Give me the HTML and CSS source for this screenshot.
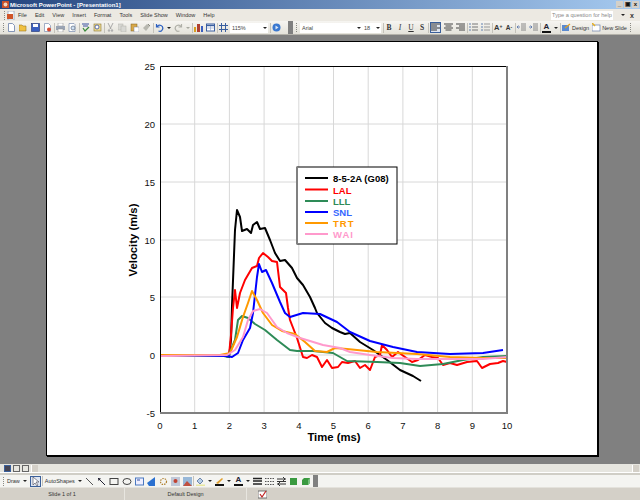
FILE: index.html
```html
<!DOCTYPE html>
<html lang="en">
<head>
<meta charset="UTF-8">
<title>Microsoft PowerPoint - [Presentation1]</title>
<link rel="stylesheet" href="styles.css">
</head>
<body>
<div class="app">

  <!-- title bar -->
  <div class="titlebar">
    <svg class="ic app-icon" viewBox="0 0 9 9"><rect width="9" height="9" fill="#c8502a"/><circle cx="4.5" cy="4.5" r="2.5" fill="#f5d8c0"/></svg>
    <span class="title-text">Microsoft PowerPoint - [Presentation1]</span>
    <div class="win-buttons">
      <span class="win-btn">_</span><span class="win-btn">&#9635;</span><span class="win-btn">x</span>
    </div>
  </div>

  <!-- menu bar -->
  <div class="menubar">
    <span class="grip"></span>
    <svg class="ic doc-icon" viewBox="0 0 9 9"><rect x="1" y="0" width="6" height="9" fill="#fff" stroke="#7a8cb0" stroke-width=".6"/><rect x="0" y="3" width="6" height="5" fill="#d0552a"/></svg>
    <span class="menu">File</span>
    <span class="menu">Edit</span>
    <span class="menu">View</span>
    <span class="menu">Insert</span>
    <span class="menu">Format</span>
    <span class="menu">Tools</span>
    <span class="menu">Slide Show</span>
    <span class="menu">Window</span>
    <span class="menu">Help</span>
    <span class="spacer"></span>
    <span class="help-box">Type a question for help</span>
    <span class="drop"></span>
    <span class="close-x">x</span>
  </div>

  <!-- standard + formatting toolbars -->
  <div class="toolbar">
    <span class="grip"></span>
    <svg class="ic" viewBox="0 0 9 9"><path d="M1.5.5h4l2 2v6h-6z" fill="#fff" stroke="#6a7fa8" stroke-width=".8"/></svg>
    <svg class="ic" viewBox="0 0 9 9"><path d="M0 2h3l1 1h3v5H0z" fill="#f0c040" stroke="#a07820" stroke-width=".6"/></svg>
    <svg class="ic" viewBox="0 0 9 9"><rect x=".5" y=".5" width="8" height="8" fill="#3a5fc0" stroke="#1c2f70" stroke-width=".6"/><rect x="2" y="1" width="5" height="3" fill="#fff"/></svg>
    <svg class="ic" viewBox="0 0 9 9"><path d="M1.5.5h4l2 2v6h-6z" fill="#fff" stroke="#7a8cb0" stroke-width=".7"/><circle cx="6" cy="6.5" r="2" fill="#d84a30"/></svg>
    <span class="sep"></span>
    <svg class="ic" viewBox="0 0 9 9"><rect x="2" y="0" width="5" height="3" fill="#fff" stroke="#888" stroke-width=".5"/><rect x="0" y="3" width="9" height="4" fill="#9aa4b4"/><rect x="2" y="6" width="5" height="3" fill="#fff" stroke="#888" stroke-width=".5"/></svg>
    <svg class="ic" viewBox="0 0 9 9"><path d="M1 .5h5l1 1v7H1z" fill="#fff" stroke="#7a8cb0" stroke-width=".7"/><circle cx="5" cy="5" r="2" fill="#cfe0f4" stroke="#5a6a80" stroke-width=".7"/></svg>
    <span class="sep"></span>
    <svg class="ic" viewBox="0 0 9 9"><path d="M1 1h7M2 3h5" stroke="#3a50a0" stroke-width="1.2"/><path d="M2 5l2 3 4-4" fill="none" stroke="#3a8a3a" stroke-width="1.2"/></svg>
    <svg class="ic" viewBox="0 0 9 9"><rect x="1" y="1" width="7" height="7" fill="#e8d890" stroke="#907830" stroke-width=".6"/><circle cx="4" cy="4" r="2" fill="#fff" stroke="#3a50a0" stroke-width=".8"/></svg>
    <span class="sep"></span>
    <svg class="ic" viewBox="0 0 9 9"><path d="M2 0l3 6M7 0L4 6" stroke="#a0a0a0" stroke-width=".9"/><circle cx="3" cy="7.5" r="1.2" fill="#b0b0b0"/><circle cx="6" cy="7.5" r="1.2" fill="#b0b0b0"/></svg>
    <svg class="ic" viewBox="0 0 9 9"><rect x="0" y="1" width="5" height="6" fill="#d8d8d4" stroke="#b0b0a8" stroke-width=".5"/><rect x="3" y="3" width="5" height="6" fill="#d8d8d4" stroke="#b0b0a8" stroke-width=".5"/></svg>
    <svg class="ic" viewBox="0 0 9 9"><rect x="1" y="1" width="6" height="7" fill="#d8a848" stroke="#806020" stroke-width=".5"/><rect x="4" y="4" width="5" height="5" fill="#fff" stroke="#8088a0" stroke-width=".5"/></svg>
    <svg class="ic" viewBox="0 0 9 9"><path d="M1 5l4-4 3 2-4 5z" fill="#b8b8b0"/><path d="M6 1l2 2" stroke="#8a8a80"/></svg>
    <span class="sep"></span>
    <svg class="ic" viewBox="0 0 9 9"><path d="M1.5 1v3h3M2 4a3 3 0 1 1 1.5 4" fill="none" stroke="#2a5fc0" stroke-width="1.2"/></svg>
    <span class="drop"></span>
    <svg class="ic" viewBox="0 0 9 9"><path d="M7.5 1v3h-3M7 4a3 3 0 1 0-1.5 4" fill="none" stroke="#b0b0a8" stroke-width="1.2"/></svg>
    <span class="drop off"></span>
    <span class="sep"></span>
    <svg class="ic" viewBox="0 0 9 9"><rect x="0" y="4" width="2" height="5" fill="#d8a020"/><rect x="3" y="1" width="3" height="8" fill="#b04030"/><rect x="7" y="3" width="2" height="6" fill="#3a5fc0"/></svg>
    <svg class="ic" viewBox="0 0 9 9"><rect x=".5" y="1" width="8" height="7" fill="#fff" stroke="#3a5fa0"/><path d="M.5 2.5h8" stroke="#3a5fa0" stroke-width="1.4"/><path d="M.5 5h8M4.5 3v5" stroke="#8aa0c8" stroke-width=".6"/></svg>
    <span class="sep"></span>
    <svg class="ic" viewBox="0 0 9 9"><path d="M0 2.5h9M0 6.500h9M2.500 0v9M6.500 0v9" stroke="#3a5fa0" stroke-width="1"/></svg>
    <span class="combo zoom-combo"><span class="combo-text">115%</span><span class="drop"></span></span>
    <span class="sep"></span>
    <svg class="ic" viewBox="0 0 9 9"><circle cx="4.500" cy="4.500" r="4" fill="#3a78d0"/><path d="M3.500 2.500l3 2-3 2z" fill="#dce8f8"/></svg>
    <span class="bar-end"></span>
    <span class="grip"></span>
    <span class="combo font-combo"><span class="combo-text">Arial</span><span class="drop"></span></span>
    <span class="combo size-combo"><span class="combo-text">18</span><span class="drop"></span></span>
    <span class="sep"></span>
    <span class="fmt bold">B</span>
    <span class="fmt italic">I</span>
    <span class="fmt under">U</span>
    <span class="fmt bold">S</span>
    <span class="sep"></span>
    <span class="active-btn"><svg class="ic" viewBox="0 0 9 9"><path d="M0 1h9M0 3h6M0 5h9M0 7h6" stroke="#333" stroke-width="1"/></svg></span>
    <svg class="ic" viewBox="0 0 9 9"><path d="M0 1h9M1.500 3h6M0 5h9M1.500 7h6" stroke="#444" stroke-width="1"/></svg>
    <svg class="ic" viewBox="0 0 9 9"><path d="M0 1h9M3 3h6M0 5h9M3 7h6" stroke="#444" stroke-width="1"/></svg>
    <span class="sep"></span>
    <svg class="ic" viewBox="0 0 9 9"><path d="M0 1h2M0 4h2M0 7h2" stroke="#6080b0"/><path d="M3 1h6M3 4h6M3 7h6" stroke="#777"/></svg>
    <svg class="ic" viewBox="0 0 9 9"><path d="M0 1h2M0 4h2M0 7h2" stroke="#6080b0"/><path d="M3 1h6M3 4h6M3 7h6" stroke="#999"/></svg>
    <span class="sep"></span>
    <span class="fmt bold grow-a">A<i>+</i></span>
    <span class="fmt bold grow-a small-a">A<i>-</i></span>
    <span class="sep"></span>
    <svg class="ic" viewBox="0 0 9 9"><path d="M4 1h5M4 3h5M4 5h5M4 7h5" stroke="#888"/><path d="M3 4H0M1.500 2.500L0 4l1.500 1.500" fill="none" stroke="#5070a8" stroke-width=".8"/></svg>
    <svg class="ic" viewBox="0 0 9 9"><path d="M4 1h5M4 3h5M4 5h5M4 7h5" stroke="#888"/><path d="M0 4h3M1.500 2.500L3 4 1.500 5.500" fill="none" stroke="#5070a8" stroke-width=".8"/></svg>
    <span class="sep"></span>
    <span class="color-a">A</span>
    <span class="drop"></span>
    <span class="sep"></span>
    <span class="task"><svg class="ic" viewBox="0 0 9 9"><path d="M0 2h7v6H0z" fill="#5a8ad0"/><path d="M3 5l5-4" stroke="#e0a020" stroke-width="1.200"/></svg>Design</span>
    <span class="task"><svg class="ic" viewBox="0 0 9 9"><rect y="2" width="8" height="6" fill="#fff" stroke="#6a7fa8" stroke-width=".7"/><path d="M0 0l3 3" stroke="#e8b020" stroke-width="1.500"/></svg>New Slide</span>
    <span class="grip"></span>
  </div>

  <!-- slide area -->
  <div class="workspace">
    <div class="slide">
      <svg class="chart" viewBox="47 42 550 413" width="550" height="413">
        <!-- grid -->
        <g class="grid">
          <path d="M194.700 66V412M229.400 66V412M264.100 66V412M298.800 66V412M333.500 66V412M368.200 66V412M402.900 66V412M437.600 66V412M472.300 66V412"/>
          <path d="M160 124H507M160 182H507M160 240H507M160 297H507M160 355H507"/>
        </g>

        <!-- series -->
        <polyline class="line" stroke="#000" points="160,355 226,356 229,357 231,340 232,306 235,230 237,210 240,217 242,231 247,229 251,233 253,225 257,222 260,229 265,228 270,240 275,253 280,261 285,260 292,268 297,278 303,285 310,297 315,308 317,313 325,323 332,328 340,332 345,334 350,333 360,342 373,350 387,360 400,370 413,376 421,381"/>
        <polyline class="line" stroke="#f00" points="226,356 229,355 231,335 233,308 235,290 237,308 240,293 245,280 252,268 257,266 259,258 263,253 268,257 272,261 277,262 280,287 286,293 288,308 290,320 297,338 303,357 307,358 312,355 317,357 322,367 327,360 332,368 338,367 342,362 348,363 355,361 360,368 365,365 370,370 375,357 380,355 382,345 387,350 392,357 398,352 405,357 412,362 418,360 425,355 432,357 438,358 443,365 450,363 457,365 467,362 477,361 482,368 490,364 498,363 503,361 507,362"/>
        <polyline class="line" stroke="#2e8b57" points="160,355 224,356 228,357 235,340 238,320 242,316 248,318 255,324 265,330 277,340 290,350 297,351 313,351 333,353 347,361 377,362 400,363 420,366 443,364 463,360 483,357 507,356"/>
        <polyline class="line" stroke="#00f" points="160,355 226,356 232,357 238,353 243,340 250,328 253,313 257,277 259,264 262,272 266,270 272,283 280,302 285,313 290,317 303,313 320,314 337,322 350,332 370,341 393,347 417,352 450,354 483,353 503,350"/>
        <polyline class="line" stroke="#f90" points="160,355 220,355 230,353 237,337 243,317 248,303 252,291 257,300 263,313 272,325 282,331 295,334 305,342 315,351 327,352 335,348 347,349 377,352 417,354 450,357 483,358 507,358"/>
        <polyline class="line" stroke="#f9c" points="160,356 227,355 235,350 243,337 248,320 253,311 260,309 267,313 277,327 287,333 300,338 310,341 323,345 340,348 350,352 370,355 393,358 417,359 450,359 483,359 507,357"/>

        <!-- plot frame: black top and left, grey right and bottom -->
        <path class="frame" d="M160.500 413V66.500H507"/>
        <path class="frame-edge" d="M507 66V413M160 413H508"/>

        <!-- axis labels -->
        <g class="y-ticks">
          <text x="155" y="70">25</text>
          <text x="155" y="128">20</text>
          <text x="155" y="186">15</text>
          <text x="155" y="244">10</text>
          <text x="155" y="301">5</text>
          <text x="155" y="359">0</text>
          <text x="155" y="417">-5</text>
        </g>
        <g class="x-ticks">
          <text x="160" y="428.500">0</text>
          <text x="194.700" y="428.500">1</text>
          <text x="229.400" y="428.500">2</text>
          <text x="264.100" y="428.500">3</text>
          <text x="298.800" y="428.500">4</text>
          <text x="333.500" y="428.500">5</text>
          <text x="368.200" y="428.500">6</text>
          <text x="402.900" y="428.500">7</text>
          <text x="437.600" y="428.500">8</text>
          <text x="472.300" y="428.500">9</text>
          <text x="507" y="428.500">10</text>
        </g>
        <text class="axis-title" x="334" y="441">Time (ms)</text>
        <text class="axis-title" transform="translate(137 240) rotate(-90)">Velocity (m/s)</text>

        <!-- legend -->
        <rect class="legend-box" x="297" y="167" width="100" height="77"/>
        <path class="legend-edge" d="M297 167V244"/>
        <g class="legend">
          <path class="line" stroke="#000" d="M305 178h23"/>
          <path class="line" stroke="#f00" d="M305 189.500h23"/>
          <path class="line" stroke="#2e8b57" d="M305 201h23"/>
          <path class="line" stroke="#00f" d="M305 212h23"/>
          <path class="line" stroke="#f90" d="M305 223h23"/>
          <path class="line" stroke="#f9c" d="M305 234h23"/>
          <text x="333" y="182" fill="#000">8-5-2A (G08)</text>
          <text x="333" y="193.500" fill="#f00">LAL</text>
          <text x="333" y="205" fill="#2e8b57">LLL</text>
          <text x="333" y="216" fill="#3366ff">SNL</text>
          <text x="333" y="227" fill="#f90" class="wide">TRT</text>
          <text x="333" y="238" fill="#f9c" class="wide">WAI</text>
        </g>
      </svg>
    </div>
  </div>

  <!-- view buttons + scrollbar -->
  <div class="viewbar">
    <span class="view-btn on"></span>
    <span class="view-btn"></span>
    <span class="view-btn"></span>
    <span class="scroll-btn"></span>
    <span class="spacer"></span>
    <span class="scroll-btn right"></span>
  </div>

  <!-- drawing toolbar -->
  <div class="drawbar">
    <span class="grip"></span>
    <span class="menu">Draw</span><span class="drop"></span>
    <span class="active-btn"><svg class="ic" viewBox="0 0 9 9"><path d="M2 0v8l2-2 2 3 1-1-2-3h3z" fill="#fff" stroke="#445" stroke-width=".6"/></svg></span>
    <span class="sep"></span>
    <span class="menu">AutoShapes</span><span class="drop"></span>
    <svg class="ic" viewBox="0 0 9 9"><path d="M1 1l7 7" stroke="#555"/></svg>
    <svg class="ic" viewBox="0 0 9 9"><path d="M1 1l7 7" stroke="#223"/><path d="M1 1l3 .5L1.500 4z" fill="#223"/></svg>
    <svg class="ic wide-ic" viewBox="0 0 9 9"><rect x=".5" y="1.500" width="8" height="6" fill="none" stroke="#444"/></svg>
    <svg class="ic wide-ic" viewBox="0 0 9 9"><ellipse cx="4.500" cy="4.500" rx="4" ry="3" fill="none" stroke="#444"/></svg>
    <svg class="ic" viewBox="0 0 9 9"><rect x=".5" y="1" width="8" height="7" fill="#eef" stroke="#4a78c0"/><path d="M2 3h3" stroke="#3050a0"/></svg>
    <svg class="ic" viewBox="0 0 9 9"><path d="M0 6L8 0v9H2z" fill="#2a70d0"/></svg>
    <svg class="ic" viewBox="0 0 9 9"><circle cx="4.500" cy="4.500" r="3" fill="none" stroke="#b08030" stroke-width="1.200" stroke-dasharray="1.500 1"/></svg>
    <svg class="ic" viewBox="0 0 9 9"><rect width="9" height="9" fill="#c0c8d8"/><circle cx="4.500" cy="4" r="2" fill="#c04030"/></svg>
    <svg class="ic" viewBox="0 0 9 9"><rect width="9" height="9" fill="#98b8d8"/><path d="M0 9l4-5 5 5z" fill="#c05040"/></svg>
    <span class="sep"></span>
    <svg class="ic" viewBox="0 0 9 9"><path d="M1 4l3-3 3 3-3 3z" fill="#b8d0e8" stroke="#406090" stroke-width=".7"/><rect y="7.500" width="9" height="1.500" fill="#e8e8a0"/></svg>
    <span class="drop"></span>
    <svg class="ic" viewBox="0 0 9 9"><path d="M1 6l6-5 1 1-5 5z" fill="#e0a030"/><rect y="7" width="9" height="2" fill="#111"/></svg>
    <span class="drop"></span>
    <span class="color-a">A</span>
    <span class="drop"></span>
    <svg class="ic" viewBox="0 0 9 9"><path d="M0 1.500h9M0 4h9M0 7h9" stroke="#222" stroke-width="1.300"/></svg>
    <svg class="ic" viewBox="0 0 9 9"><path d="M0 1.500h9M0 4.500h9M0 7.500h9" stroke="#555" stroke-dasharray="1.500 1"/></svg>
    <svg class="ic" viewBox="0 0 9 9"><path d="M0 2h9M0 4.500h9M0 7h9" stroke="#333"/><path d="M6 0l2 2-2 2M3 5L1 7l2 2" fill="none" stroke="#333"/></svg>
    <svg class="ic" viewBox="0 0 9 9"><rect width="7" height="7" x="1" y="1" fill="#3a9a40"/></svg>
    <svg class="ic" viewBox="0 0 9 9"><path d="M1 3l2-2h6v5L7 8H1z" fill="#3a9a40"/><path d="M7 3v5l2-2V1z" fill="#7ac080"/></svg>
    <span class="grip dark"></span>
  </div>

  <!-- status bar -->
  <div class="statusbar">
    <span class="status-cell slide-count">Slide 1 of 1</span>
    <span class="status-cell design-name">Default Design</span>
    <span class="status-cell spell"><svg class="ic" viewBox="0 0 9 9"><rect y="1" width="9" height="7" fill="#fff" stroke="#555" stroke-width=".8"/><path d="M2 4l2 3 4-6" fill="none" stroke="#c02020" stroke-width="1.200"/></svg></span>
  </div>

</div>
</body>
</html>
```

FILE: styles.css
```css
html, body {
  margin: 0;
  padding: 0;
  background: #808080;
}
body {
  font-family: "Liberation Sans", Arial, sans-serif;
  font-size: 5.5px;
  color: #333;
  overflow: hidden;
}
.app {
  width: 640px;
  height: 500px;
  display: flex;
  flex-direction: column;
  overflow: hidden;
}
.ic {
  width: 9px;
  height: 9px;
  flex: none;
  display: block;
}
.wide-ic {
  width: 10px;
}
.spacer {
  flex: 1;
}

/* title bar */
.titlebar {
  height: 9px;
  flex: none;
  display: flex;
  align-items: center;
  padding: 0 1px 0 2px;
  background: linear-gradient(to right, #24457f, #a6caf0);
  color: #fff;
  font-weight: bold;
  font-size: 6px;
}
.app-icon {
  width: 7px;
  height: 7px;
  margin-right: 1px;
}
.title-text {
  white-space: nowrap;
}
.win-buttons {
  margin-left: auto;
  display: flex;
  gap: 1px;
}
.win-btn {
  width: 7px;
  height: 7px;
  background: #d4d0c8;
  color: #111;
  font-size: 6px;
  line-height: 6px;
  text-align: center;
}

/* menu and toolbars */
.menubar {
  height: 12px;
  flex: none;
  display: flex;
  align-items: center;
  gap: 8px;
  padding: 0 6px 0 4px;
  background: #ece9e2;
  white-space: nowrap;
}
.grip {
  width: 1px;
  height: 9px;
  flex: none;
  background: repeating-linear-gradient(to bottom, #8a8a84 0 1px, transparent 1px 2px);
}
.grip.dark {
  width: 5px;
  height: 12px;
  background: #808080;
}
.doc-icon {
  margin: 0 -6px 0 -6px;
}
.help-box {
  width: 62px;
  height: 9px;
  line-height: 9px;
  padding-left: 1px;
  box-sizing: border-box;
  background: #fff;
  color: #888;
  font-size: 5.6px;
}
.close-x {
  font-weight: bold;
  font-size: 7px;
  margin-left: -3px;
}
.drop {
  width: 0;
  height: 0;
  flex: none;
  border: 2px solid transparent;
  border-top: 2px solid #222;
  border-bottom: 0;
}
.drop.off {
  border-top-color: #a8a8a0;
}
.toolbar {
  height: 13px;
  flex: none;
  display: flex;
  align-items: center;
  gap: 3px;
  padding: 0 1px 0 3px;
  background: linear-gradient(to bottom, #f6f5f1, #e4e2da);
  border-bottom: 1px solid #b4b2aa;
  white-space: nowrap;
}
.sep {
  width: 1px;
  height: 10px;
  flex: none;
  margin: 0 -1.5px;
  background: #c4c2ba;
}
.combo {
  height: 10px;
  flex: none;
  display: flex;
  align-items: center;
  justify-content: space-between;
  padding: 0 1px 0 2px;
  box-sizing: border-box;
  background: #fff;
}
.combo-text {
  color: #444;
}
.zoom-combo {
  width: 38px;
  margin-left: -1px;
}
.font-combo {
  width: 62px;
}
.size-combo {
  width: 19px;
  margin-left: -3px;
}
.bar-end {
  width: 5px;
  height: 13px;
  flex: none;
  background: #808080;
  margin-left: 4px;
}
.fmt {
  width: 8px;
  flex: none;
  text-align: center;
  font-size: 7.5px;
  font-family: "Liberation Serif", serif;
  color: #333;
}
.fmt i {
  font-size: 5px;
  font-style: normal;
  vertical-align: top;
}
.bold {
  font-weight: bold;
}
.italic {
  font-style: italic;
}
.under {
  text-decoration: underline;
}
.grow-a {
  font-family: "Liberation Sans", sans-serif;
}
.small-a {
  font-size: 6.5px;
}
.active-btn {
  width: 11px;
  height: 11px;
  flex: none;
  display: flex;
  align-items: center;
  justify-content: center;
  box-sizing: border-box;
  border: 1px solid #3a5f9a;
  background: #dfe6f2;
}
.color-a {
  width: 9px;
  flex: none;
  text-align: center;
  font-size: 8px;
  font-weight: bold;
  color: #223;
  border-bottom: 2px solid #111;
  line-height: 8px;
}
.task {
  display: flex;
  align-items: center;
  gap: 1px;
  flex: none;
}

/* slide */
.workspace {
  flex: 1;
  min-height: 0;
  background: #808080;
  padding: 6px 0 0 46px;
}
.slide {
  width: 550px;
  height: 413px;
  background: #fff;
  border: 1px solid #000;
  box-shadow: 1px 1px 0 #000;
}
.chart {
  display: block;
}
.grid path {
  fill: none;
  stroke: #d8d8d8;
  stroke-width: 1;
}
.line {
  fill: none;
  stroke-width: 2;
  stroke-linejoin: round;
}
.frame {
  fill: none;
  stroke: #000;
  stroke-width: 1;
}
.frame-edge {
  fill: none;
  stroke: #808080;
  stroke-width: 2;
}
.y-ticks text {
  font-size: 9.5px;
  fill: #111;
  text-anchor: end;
}
.x-ticks text {
  font-size: 9.5px;
  fill: #111;
  text-anchor: middle;
}
.axis-title {
  font-size: 11.3px;
  font-weight: bold;
  text-anchor: middle;
}
.legend-box {
  fill: #fff;
  stroke: #000;
  stroke-width: 1;
}
.legend-edge {
  stroke: #808080;
  stroke-width: 2;
}
.legend text {
  font-size: 9.5px;
  font-weight: bold;
}
.legend .wide {
  letter-spacing: 1px;
}

/* bottom bars */
.viewbar {
  height: 8px;
  flex: none;
  display: flex;
  align-items: center;
  gap: 2px;
  padding: 0 1px 0 4px;
  background: #e6e5df;
  border-bottom: 1px solid #fff;
  box-shadow: 0 2px 0 #d0cec6;
  margin-bottom: 2px;
}
.view-btn {
  width: 7px;
  height: 7px;
  flex: none;
  box-sizing: border-box;
  border: 1px solid #666;
  background: #e6e5df;
}
.view-btn.on {
  background: #445;
  border-color: #3a5f9a;
}
.scroll-btn {
  width: 6px;
  height: 7px;
  flex: none;
  background: #d4d0c8;
  border-left: 1px solid #fff;
}
.drawbar {
  height: 12px;
  flex: none;
  display: flex;
  align-items: center;
  gap: 3px;
  padding: 0 3px;
  background: #f4f4f1;
  border-bottom: 1px solid #e4e2dc;
  white-space: nowrap;
}
.statusbar {
  height: 12px;
  flex: none;
  display: flex;
  align-items: center;
  background: #d4d0c8;
}
.status-cell {
  display: flex;
  align-items: center;
  justify-content: center;
  box-sizing: border-box;
  height: 100%;
  border-right: 1px solid #e8e6e0;
}
.slide-count {
  width: 125px;
}
.design-name {
  width: 122px;
}
.spell {
  width: 30px;
  border-right: 0;
}
```
